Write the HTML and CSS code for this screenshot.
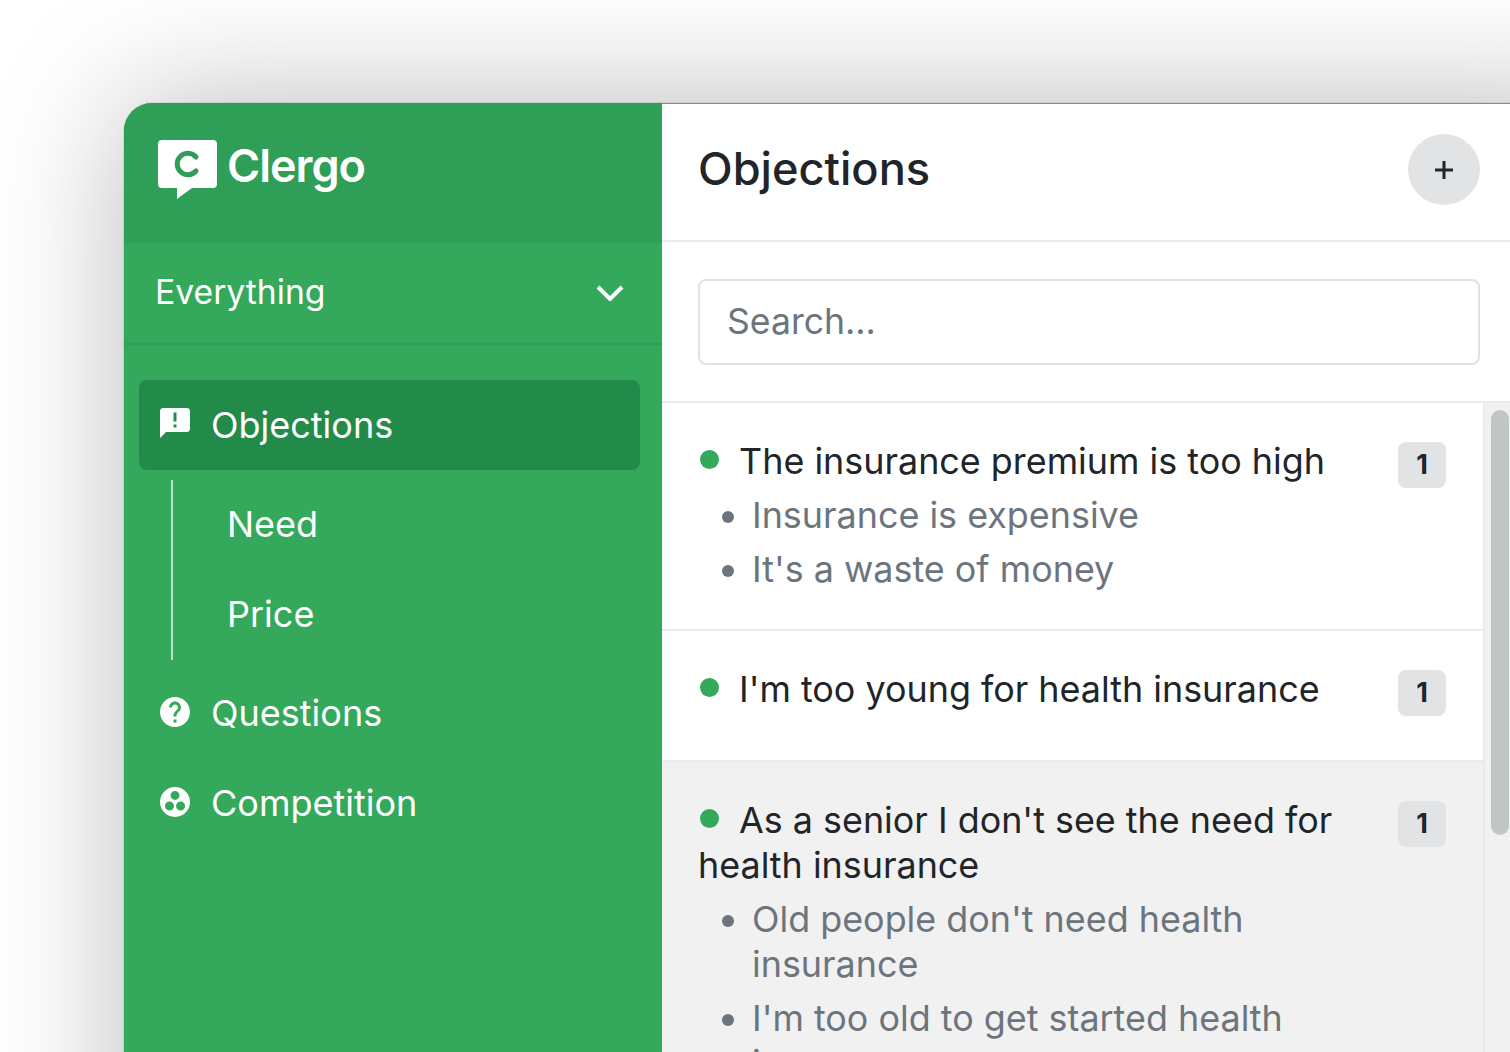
FILE: index.html
```html
<!DOCTYPE html>
<html lang="en">
<head>
<meta charset="utf-8">
<title>Clergo</title>
<link rel="stylesheet" href="styles.css">
</head>
<body>
<div class="window">
  <aside class="sidebar">
    <div class="brand">
      <svg class="logo" viewBox="0 0 60 60" width="60" height="60" aria-hidden="true">
        <path class="logo-bubble" d="M4 0h51a4 4 0 0 1 4 4v40a4 4 0 0 1-4 4H34L19 59V48H4a4 4 0 0 1-4-4V4a4 4 0 0 1 4-4z"/>
        <path class="logo-c" d="M38 17a10.700 10.700 0 1 0 0 14"/>
      </svg>
      <span class="brand-name">Clergo</span>
    </div>
    <div class="scope">
      <span class="scope-label">Everything</span>
      <svg class="chevron" viewBox="0 0 28 16" width="28" height="16" aria-hidden="true"><path d="M2 2l12 12L26 2"/></svg>
    </div>
    <nav class="nav">
      <a class="nav-item active">
        <svg class="nav-icon" viewBox="0 0 24 24" aria-hidden="true"><path d="M20 2H4c-1.1 0-1.99.9-1.99 2L2 22l4-4h14c1.1 0 2-.9 2-2V4c0-1.1-.9-2-2-2zm-7 9h-2V5h2v6zm0 4h-2v-2h2v2z"/></svg>
        <span>Objections</span>
      </a>
      <div class="subnav">
        <a class="sub-item">Need</a>
        <a class="sub-item">Price</a>
      </div>
      <a class="nav-item">
        <svg class="nav-icon" viewBox="0 0 24 24" aria-hidden="true"><path d="M12 2C6.48 2 2 6.48 2 12s4.48 10 10 10 10-4.48 10-10S17.52 2 12 2zm1 17h-2v-2h2v2zm2.07-7.75l-.9.92C13.45 12.9 13 13.5 13 15h-2v-.5c0-1.1.45-2.1 1.17-2.83l1.24-1.26c.37-.36.59-.86.59-1.41 0-1.1-.9-2-2-2s-2 .9-2 2H8c0-2.21 1.79-4 4-4s4 1.79 4 4c0 .88-.36 1.68-.93 2.25z"/></svg>
        <span>Questions</span>
      </a>
      <a class="nav-item">
        <svg class="nav-icon" viewBox="0 0 24 24" aria-hidden="true"><path fill-rule="evenodd" d="M12 2a10 10 0 1 0 0 20 10 10 0 0 0 0-20zm0 2.600a3 3 0 1 1 0 6 3 3 0 0 1 0-6zM8.300 11.700a3 3 0 1 1 0 6 3 3 0 0 1 0-6zm7.400 0a3 3 0 1 1 0 6 3 3 0 0 1 0-6z"/></svg>
        <span>Competition</span>
      </a>
    </nav>
  </aside>
  <main class="main">
    <header class="main-head">
      <h1>Objections</h1>
      <button class="add" type="button" aria-label="Add">
        <svg viewBox="0 0 20 20" width="20" height="20" aria-hidden="true"><path d="M10 1v18M1 10h18"/></svg>
      </button>
    </header>
    <div class="search-wrap">
      <div class="search">Search...</div>
    </div>
    <div class="content">
      <div class="list">
        <article class="item">
          <div class="item-body">
            <p class="item-title"><i class="dot"></i>The insurance premium is too high</p>
            <ul class="variants">
              <li>Insurance is expensive</li>
              <li>It's a waste of money</li>
            </ul>
          </div>
          <span class="badge">1</span>
        </article>
        <article class="item">
          <div class="item-body">
            <p class="item-title"><i class="dot"></i>I'm too young for health insurance</p>
          </div>
          <span class="badge">1</span>
        </article>
        <article class="item selected">
          <div class="item-body">
            <p class="item-title"><i class="dot"></i>As a senior I don't see the need for health insurance</p>
            <ul class="variants">
              <li>Old people don't need health insurance</li>
              <li>I'm too old to get started health insurance</li>
            </ul>
          </div>
          <span class="badge">1</span>
        </article>
      </div>
      <div class="scrollbar"><div class="thumb"></div></div>
    </div>
  </main>
</div>
</body>
</html>
```
FILE: styles.css
```css
* { box-sizing: border-box; }
html, body { height: 100%; }
body {
  margin: 0;
  height: 1052px;
  overflow: hidden;
  background: #fff;
  font-family: Inter, "Noto Sans", sans-serif;
  color: #212529;
}
.window {
  display: flex;
  width: 1500px;
  height: 1100px;
  margin: 103px 0 0 124px;
  border-top-left-radius: 28px;
  background: #fff;
  box-shadow: 0 0 0 1px rgba(0, 0, 0, .08), 0 0 135px rgba(0, 0, 0, .28);
  overflow: hidden;
}
.sidebar {
  flex: none;
  width: 538px;
  background: #34a95c;
  color: #fff;
}
.brand {
  display: flex;
  align-items: center;
  gap: 9px;
  height: 140px;
  padding: 0 0 18px 34px;
  background: #2f9e56;
}
.logo { display: block; margin-top: 12px; }
.logo-bubble { fill: #fff; }
.logo-c { fill: none; stroke: #2f9e56; stroke-width: 5; stroke-linecap: round; }
.brand-name { margin-top: 2px; font-size: 45px; font-weight: 600; letter-spacing: -1px; }
.scope {
  display: flex;
  align-items: center;
  justify-content: space-between;
  height: 102px;
  padding: 0 38px 0 31px;
  border-bottom: 2px solid #2f9e56;
}
.scope-label { font-size: 33.700px; margin-top: -4px; }
.chevron { fill: none; stroke: #fff; stroke-width: 4; }
.nav { padding: 35px 22px 0 15px; }
.nav-item, .sub-item {
  display: flex;
  align-items: center;
  height: 90px;
  padding-bottom: 2px;
  font-size: 36px;
}
.nav-item { gap: 18px; padding-left: 18px; border-radius: 8px; }
.nav-item.active { padding-bottom: 0; background: #238b4a; }
.nav-icon { width: 36px; height: 36px; margin-top: -2px; fill: #fff; }
.nav-item.active .nav-icon { margin-top: -4px; }
.subnav {
  margin: 10px 0 9px 32px;
  padding-left: 54px;
  border-left: 2px solid rgba(255, 255, 255, .65);
}
.main {
  flex: 1;
  border-top: 1px solid #8b8f8d;
}
.main-head {
  display: flex;
  align-items: center;
  justify-content: space-between;
  width: 848px;
  height: 138px;
  padding: 0 1px 5px 36px;
  border-bottom: 2px solid #e9ecef;
}
.main-head h1 { margin: 0 0 2px; font-size: 45.200px; font-weight: 500; }
.add {
  display: flex;
  align-items: center;
  justify-content: center;
  width: 72px;
  height: 71px;
  margin-right: 29px;
  padding: 0;
  border: 0;
  border-radius: 50%;
  background: #e1e3e5;
}
.add path { fill: none; stroke: #212529; stroke-width: 3; }
.search-wrap {
  width: 848px;
  padding: 37px 30px 36px 36px;
  border-bottom: 2px solid #e9ecef;
}
.search {
  height: 86px;
  padding-left: 27px;
  border: 2px solid #dee2e6;
  border-radius: 8px;
  color: #6c757d;
  font-size: 35.600px;
  line-height: 81px;
}
.content { display: flex; width: 848px; }
.list { flex: none; width: 821px; }
.item {
  display: flex;
  justify-content: space-between;
  min-height: 131px;
  padding: 36px 37px 37px 36px;
  border-bottom: 2px solid #e9ecef;
}
.item.selected { background: #f1f1f2; }
.item-body { width: 640px; }
.item-title { margin: 0; font-size: 35.900px; line-height: 45px; }
.dot {
  display: inline-block;
  width: 19px;
  height: 19px;
  margin: 0 20px 0 2px;
  border-radius: 50%;
  background: #34a95c;
  vertical-align: 5px;
}
.variants {
  margin: 9px 0 0;
  padding-left: 54px;
  color: #6c757d;
  font-size: 35.900px;
  line-height: 45px;
}
.variants li + li { margin-top: 9px; }
.badge {
  flex: none;
  width: 48px;
  height: 46px;
  margin-top: 3px;
  border-radius: 8px;
  background: #e1e3e5;
  text-align: center;
  font-size: 27px;
  font-weight: 700;
  line-height: 45px;
}
.scrollbar {
  flex: none;
  width: 27px;
  padding: 7px 1px 0 6px;
  border-left: 2px solid #e9ecef;
  background: #f1f1f2;
}
.thumb { height: 425px; border-radius: 9px; background: #bfc6c3; }
```
